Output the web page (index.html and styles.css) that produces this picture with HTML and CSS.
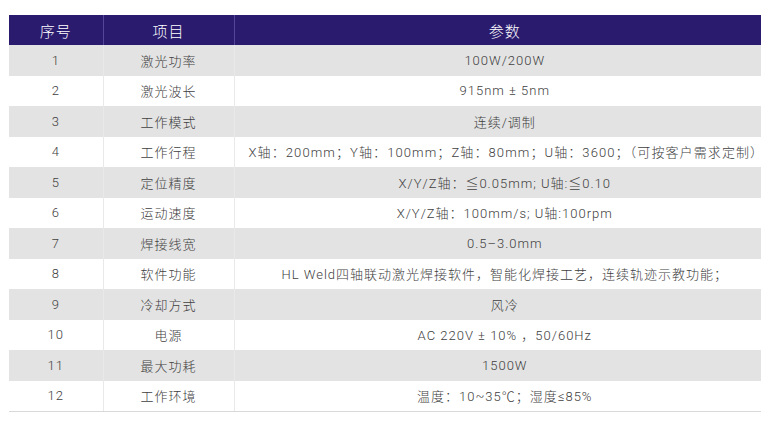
FILE: index.html
```html
<!DOCTYPE html>
<html lang="zh">
<head>
<meta charset="utf-8">
<title>参数表</title>
<link rel="stylesheet" href="styles.css">
</head>
<body>
<table class="spec">
  <colgroup>
    <col class="c-no">
    <col class="c-item">
    <col class="c-val">
  </colgroup>
  <thead>
    <tr><th>序号</th><th>项目</th><th class="val">参数</th></tr>
  </thead>
  <tbody>
    <tr><td>1</td><td>激光功率</td><td class="val">100W/200W</td></tr>
    <tr><td>2</td><td>激光波长</td><td class="val">915nm ± 5nm</td></tr>
    <tr><td>3</td><td>工作模式</td><td class="val">连续/调制</td></tr>
    <tr><td>4</td><td>工作行程</td><td class="val tight">X轴：200mm；Y轴：100mm；Z轴：80mm；U轴：3600；（可按客户需求定制）</td></tr>
    <tr><td>5</td><td>定位精度</td><td class="val">X/Y/Z轴：≦0.05mm; U轴:≦0.10</td></tr>
    <tr><td>6</td><td>运动速度</td><td class="val">X/Y/Z轴：100mm/s; U轴:100rpm</td></tr>
    <tr><td>7</td><td>焊接线宽</td><td class="val">0.5–3.0mm</td></tr>
    <tr><td>8</td><td>软件功能</td><td class="val">HL Weld四轴联动激光焊接软件，智能化焊接工艺，连续轨迹示教功能；</td></tr>
    <tr><td>9</td><td>冷却方式</td><td class="val">风冷</td></tr>
    <tr><td>10</td><td>电源</td><td class="val">AC 220V ± 10% ，50/60Hz</td></tr>
    <tr><td>11</td><td>最大功耗</td><td class="val">1500W</td></tr>
    <tr><td>12</td><td>工作环境</td><td class="val">温度：10~35℃；湿度≤85%</td></tr>
  </tbody>
</table>
</body>
</html>
```
FILE: styles.css
```css
html, body {
  margin: 0;
  padding: 0;
  background: #ffffff;
}

body {
  font-family: Roboto, "Noto Sans CJK SC", sans-serif;
}

.spec {
  margin: 15px 0 0 9px;
  width: 752px;
  border-collapse: collapse;
  table-layout: fixed;
}

.c-no { width: 94px; }
.c-item { width: 131px; }
.c-val { width: 527px; }

.spec th {
  height: 30px;
  padding: 0;
  background: #2a1b6f;
  color: #ffffff;
  font-weight: 300;
  font-size: 15px;
  letter-spacing: 1px;
  text-align: center;
  vertical-align: middle;
  border-left: 1px solid #54479a;
}

.spec th:first-child,
.spec td:first-child {
  border-left: none;
}

.spec td {
  height: 30.5px;
  padding: 0;
  box-sizing: border-box;
  font-size: 13px;
  font-weight: 300;
  letter-spacing: 1px;
  color: #404040;
  text-align: center;
  vertical-align: middle;
  border-left: 1px solid #e9e9e9;
  white-space: nowrap;
}

.spec .val {
  padding-left: 14px;
}

.spec td.tight {
  letter-spacing: 1.1px;
}

.spec tbody tr:nth-child(odd) td {
  background: #e3e3e3;
}

.spec tbody tr:last-child td {
  border-bottom: 1px solid #d9d9d9;
}
```
